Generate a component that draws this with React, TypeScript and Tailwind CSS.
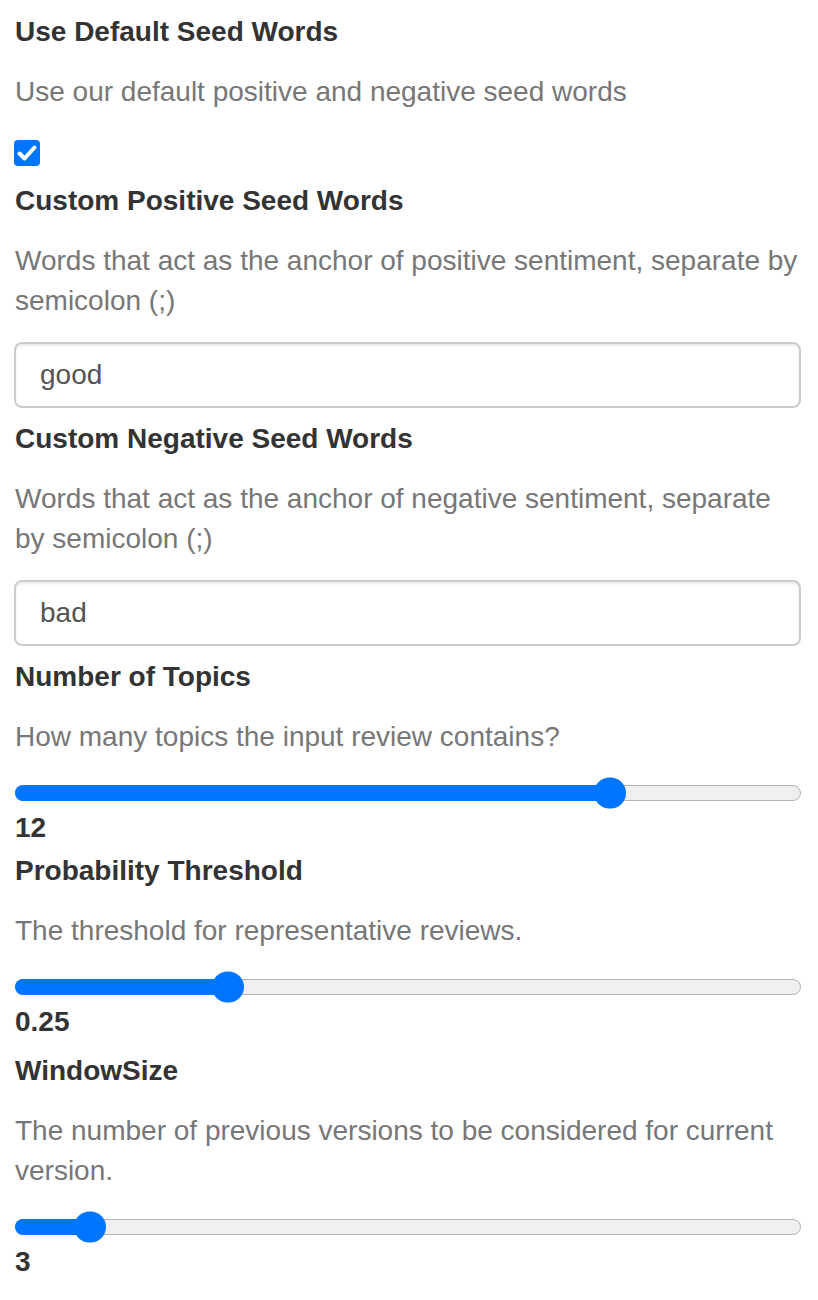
const sliders = {
  topics: { value: '12', frac: (12 - 2) / 13 },
  threshold: { value: '0.25', frac: 0.26 },
  window: { value: '3', frac: 1 / 13 },
};

function Label({ children }: { children: React.ReactNode }) {
  return <div className="text-[28px] font-bold leading-[40px] text-[#333]">{children}</div>;
}

function Help({ children }: { children: React.ReactNode }) {
  return <p className="mt-5 text-[28px] leading-[40px] text-[#777]">{children}</p>;
}

function TextInput({ value }: { value: string }) {
  return (
    <div className="mt-[21px] -ml-px flex h-[66px] items-center rounded-[8px] border-2 border-[#ccc] px-6 text-[28px] text-[#555] shadow-[inset_0_2px_2px_rgba(0,0,0,0.075)]">
      {value}
    </div>
  );
}

function Slider({ value, frac }: { value: string; frac: number }) {
  const pos = `calc(16px + ${frac} * (100% - 32px))`;
  return (
    <div className="mt-7">
      <div className="relative h-4 rounded-full border border-[#b3b3b3] bg-[#efefef]">
        <div className="absolute -top-px -bottom-px -left-px rounded-full bg-[#0075ff]" style={{ width: pos }} />
        <div
          className="absolute top-1/2 h-[31px] w-[32px] -translate-x-1/2 -translate-y-1/2 rounded-full bg-[#0075ff]"
          style={{ left: pos }}
        />
      </div>
      <div className="mt-[7px] text-[28px] font-bold leading-[40px] text-[#333]">{value}</div>
    </div>
  );
}

export default function App() {
  return (
    <div className="min-h-[1300px] bg-white pt-3 pl-[15px] pr-[17px] font-['Liberation_Sans',Arial,sans-serif]">
      {/* Default seed words */}
      <Label>Use Default Seed Words</Label>
      <Help>Use our default positive and negative seed words</Help>
      <div className="mt-7 -ml-px flex h-[26px] w-[26px] items-center justify-center rounded-[4px] bg-[#0075ff]">
        <svg width="26" height="26" viewBox="0 0 26 26" fill="none">
          <path d="M5.5 13.5 L10.5 18.5 L20.5 7.5" stroke="white" strokeWidth="4" strokeLinecap="round" strokeLinejoin="round" />
        </svg>
      </div>

      {/* Custom positive */}
      <div className="mt-[15px]">
        <Label>Custom Positive Seed Words</Label>
        <Help>Words that act as the anchor of positive sentiment, separate by semicolon (;)</Help>
        <TextInput value="good" />
      </div>

      {/* Custom negative */}
      <div className="mt-[11px]">
        <Label>Custom Negative Seed Words</Label>
        <Help>Words that act as the anchor of negative sentiment, separate by semicolon (;)</Help>
        <TextInput value="bad" />
      </div>

      {/* Topics */}
      <div className="mt-[11px]">
        <Label>Number of Topics</Label>
        <Help>How many topics the input review contains?</Help>
        <Slider {...sliders.topics} />
      </div>

      <div className="mt-[3px]">
        <Label>Probability Threshold</Label>
        <Help>The threshold for representative reviews.</Help>
        <Slider {...sliders.threshold} />
      </div>

      <div className="mt-[9px]">
        <Label>WindowSize</Label>
        <Help>The number of previous versions to be considered for current version.</Help>
        <Slider {...sliders.window} />
      </div>
    </div>
  );
}
